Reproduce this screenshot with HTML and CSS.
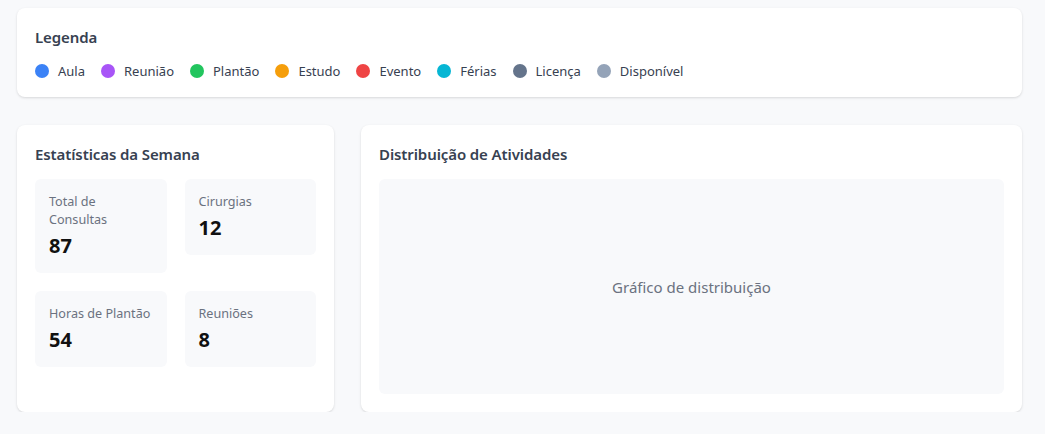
FILE: index.html
```html
<!DOCTYPE html>
<html lang="pt">
<head>
<meta charset="utf-8">
<title>Agenda</title>
<link rel="stylesheet" href="styles.css">
</head>
<body>
<main class="page">
  <section class="card legend-card">
    <h2 class="card-title">Legenda</h2>
    <ul class="legend">
      <li class="legend-item"><span class="dot dot-aula"></span>Aula</li>
      <li class="legend-item"><span class="dot dot-reuniao"></span>Reunião</li>
      <li class="legend-item"><span class="dot dot-plantao"></span>Plantão</li>
      <li class="legend-item"><span class="dot dot-estudo"></span>Estudo</li>
      <li class="legend-item"><span class="dot dot-evento"></span>Evento</li>
      <li class="legend-item"><span class="dot dot-ferias"></span>Férias</li>
      <li class="legend-item"><span class="dot dot-licenca"></span>Licença</li>
      <li class="legend-item"><span class="dot dot-disp"></span>Disponível</li>
    </ul>
  </section>
  <div class="bottom-grid">
    <section class="card">
      <h2 class="card-title">Estatísticas da Semana</h2>
      <div class="stats">
        <div class="stat"><div class="stat-label">Total de Consultas</div><div class="stat-value">87</div></div>
        <div class="stat"><div class="stat-label">Cirurgias</div><div class="stat-value">12</div></div>
        <div class="stat"><div class="stat-label">Horas de Plantão</div><div class="stat-value">54</div></div>
        <div class="stat"><div class="stat-label">Reuniões</div><div class="stat-value">8</div></div>
      </div>
    </section>
    <section class="card">
      <h2 class="card-title">Distribuição de Atividades</h2>
      <div class="chart">Gráfico de distribuição</div>
    </section>
  </div>
</main>
</body>
</html>
```
FILE: styles.css
```css
* { box-sizing: border-box; }
html, body { margin: 0; padding: 0; }
body {
  background: #f8f9fb;
  font-family: "Noto Sans", "Open Sans", sans-serif;
  color: #374151;
}
.page {
  padding: 8px 23px 0 17px;
  display: flex;
  flex-direction: column;
  gap: 28px;
}
.card {
  background: #fff;
  border-radius: 8px;
  box-shadow: 0 1px 3px rgba(0,0,0,0.10), 0 1px 2px rgba(0,0,0,0.04);
  padding: 18px;
}
.card-title {
  margin: 0 0 14px;
  font-size: 15px;
  line-height: 22px;
  font-weight: 600;
  color: #374151;
  letter-spacing: -0.1px;
}
.legend {
  list-style: none;
  margin: 0;
  padding: 1px 0 0;
  display: flex;
  flex-wrap: wrap;
  gap: 16px;
}
.legend-item {
  display: flex;
  align-items: center;
  gap: 9px;
  font-size: 13px;
  line-height: 16px;
  color: #374151;
}
.dot {
  width: 14px;
  height: 14px;
  border-radius: 50%;
  flex: none;
}
.dot-aula { background: #3b82f6; }
.dot-reuniao { background: #a855f7; }
.dot-plantao { background: #22c55e; }
.dot-estudo { background: #f59e0b; }
.dot-evento { background: #ef4444; }
.dot-ferias { background: #06b6d4; }
.dot-licenca { background: #64748b; }
.dot-disp { background: #94a3b8; }

.bottom-grid {
  display: grid;
  grid-template-columns: 317px 1fr;
  gap: 27px;
}
.stats {
  display: grid;
  grid-template-columns: 1fr 1fr;
  gap: 18px;
  align-items: start;
}
.stat {
  background: #f8f9fb;
  border-radius: 6px;
  padding: 14px;
}
.stat-label {
  font-size: 12.6px;
  line-height: 18px;
  color: #6b7280;
}
.stat-value {
  margin-top: 4px;
  font-size: 20px;
  line-height: 26px;
  font-weight: 700;
  color: #111;
}
.chart {
  height: 215px;
  background: #f8f9fb;
  border-radius: 6px;
  display: flex;
  align-items: center;
  justify-content: center;
  font-size: 15px;
  color: #6b7280;
}
```
